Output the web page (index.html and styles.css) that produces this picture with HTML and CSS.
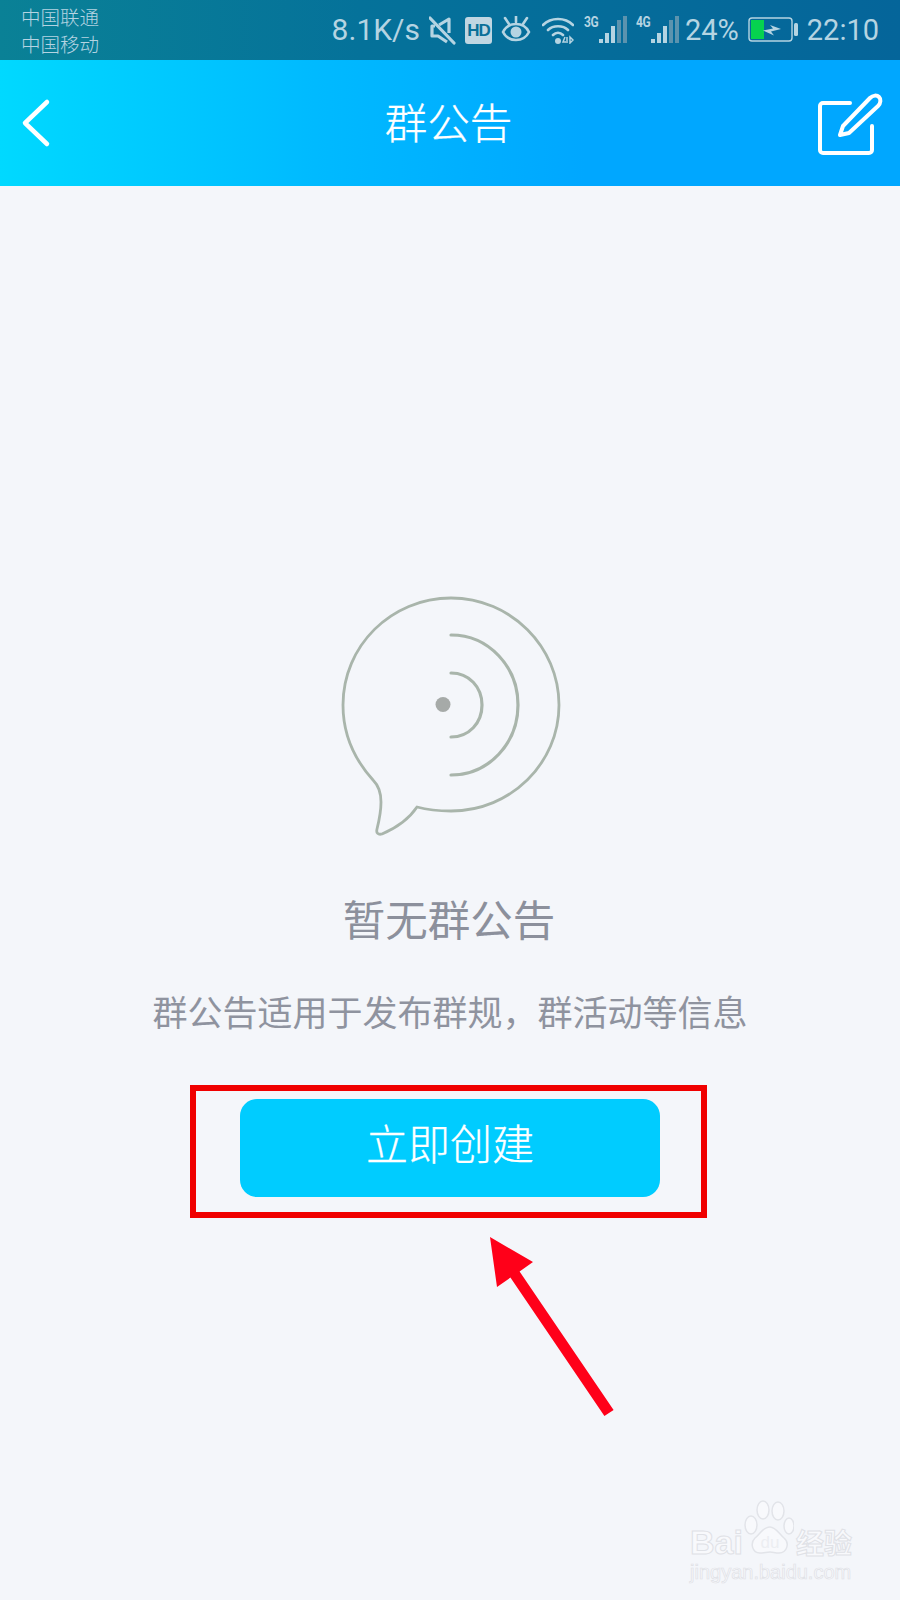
FILE: index.html
```html
<!DOCTYPE html>
<html>
  <head>
    <meta charset="utf-8">
    <title>群公告</title>
    <link rel="stylesheet" href="styles.css">
  </head>
  <body>
    <div class="status-bar">
      <div class="carriers">
        <div>中国联通</div>
        <div>中国移动</div>
      </div>
      <div class="status-right">
        <span class="speed">8.1K/s</span>
        <svg width="27" height="30" viewBox="0 0 27 30">
          <path d="M20 18V4l-10 6M6 11H3v10h6l9 6" fill="none" stroke="#b5d4e2" stroke-width="3.200" stroke-linejoin="round"/>
          <path d="M1 3l24 25" stroke="#b5d4e2" stroke-width="3.200" stroke-linecap="round"/>
        </svg>
        <span class="hd">HD</span>
        <svg class="ic-eye" width="30" height="28" viewBox="0 0 30 28">
          <path d="M2 16c3-6 8-8 13-8s10 2 13 8c-3 6-8 8-13 8s-10-2-13-8z" fill="none" stroke="#b5d4e2" stroke-width="2.600"/>
          <circle cx="15" cy="16" r="5.500" fill="#b5d4e2"/>
          <path d="M4 2l4 6M26 2l-4 6M15 0v6" stroke="#b5d4e2" stroke-width="2.600" stroke-linecap="round"/>
        </svg>
        <svg class="ic-wifi" width="32" height="28" viewBox="0 0 32 28">
          <path d="M1 9c8-8 22-8 30 0M6 14c5-5 15-5 20 0M11 19c3-3 7-3 10 0" fill="none" stroke="#b5d4e2" stroke-width="2.600" stroke-linecap="round"/>
          <circle cx="16" cy="25" r="3" fill="#b5d4e2"/>
          <path d="M23 21l-2 5h3M25 27v-6M28 21l3 3-3 3z" fill="none" stroke="#b5d4e2" stroke-width="1.500"/>
        </svg>
        <div class="net">
          <span class="net-label">3G</span>
          <svg width="30" height="28" viewBox="0 0 30 28">
            <rect x="0" y="23" width="4" height="4" fill="#b5d4e2"/>
            <rect x="6" y="17" width="4" height="10" fill="#b5d4e2"/>
            <rect x="12" y="10" width="4" height="17" fill="#b5d4e2"/>
            <rect x="18" y="4" width="4" height="23" fill="#5c93ae"/>
            <rect x="24" y="0" width="4" height="27" fill="#5c93ae"/>
          </svg>
        </div>
        <div class="net">
          <span class="net-label">4G</span>
          <svg width="30" height="28" viewBox="0 0 30 28">
            <rect x="0" y="23" width="4" height="4" fill="#b5d4e2"/>
            <rect x="6" y="17" width="4" height="10" fill="#b5d4e2"/>
            <rect x="12" y="10" width="4" height="17" fill="#b5d4e2"/>
            <rect x="18" y="4" width="4" height="23" fill="#5c93ae"/>
            <rect x="24" y="0" width="4" height="27" fill="#5c93ae"/>
          </svg>
        </div>
        <span class="pct">24%</span>
        <svg width="50" height="26" viewBox="0 0 50 26">
          <rect x="1" y="1" width="43" height="23" rx="3" fill="none" stroke="#b5d4e2" stroke-width="1.400"/>
          <rect x="3" y="3" width="13" height="19" fill="#06d24f"/>
          <path d="M15 13.500l10-2-3-3.500 11 4-10 2.500 3 4z" fill="#b5d4e2"/>
          <rect x="46" y="6" width="4" height="13" rx="1.500" fill="#b5d4e2"/>
        </svg>
        <span class="time">22:10</span>
      </div>
    </div>

    <div class="nav-bar">
      <svg width="70" height="70" viewBox="0 0 70 70">
        <path d="M47 14L25 35l22 21" fill="none" stroke="#fff" stroke-width="4.500" stroke-linecap="round" stroke-linejoin="round"/>
      </svg>
      <div class="nav-title">群公告</div>
      <svg width="70" height="70" viewBox="0 0 70 70">
        <path d="M35 15H8a3 3 0 0 0-3 3v44a3 3 0 0 0 3 3h46a3 3 0 0 0 3-3V38" fill="none" stroke="#fff" stroke-width="4" stroke-linecap="round"/>
        <path d="M25 47l3-9 27-28c3-3 7-3 9-1s2 6-1 9L34 45z" fill="none" stroke="#fff" stroke-width="4" stroke-linejoin="round"/>
      </svg>
    </div>

    <div class="main">
      <svg class="empty-icon" width="260" height="270" viewBox="0 0 260 270">
        <path d="M97 227c11 3 22 4 34 4 60 0 108-48 108-106S191 18 131 18 23 66 23 125c0 29 11 54 30 75 6 6 8 14 8 22 0 10-2 19-4 27-1 4 1 6 5 5 14-6 27-15 35-27z" fill="none" stroke="#a9b5ab" stroke-width="2.800" stroke-linejoin="round"/>
        <path d="M131 93c18 0 31 14 31 32s-13 32-31 32M131 55c38 0 67 32 67 70s-29 70-67 70" fill="none" stroke="#a9b5ab" stroke-width="3.200" stroke-linecap="round"/>
        <circle cx="123" cy="124.500" r="7.500" fill="#a6aaa8"/>
      </svg>
      <div class="empty-title">暂无群公告</div>
      <div class="empty-desc">群公告适用于发布群规，群活动等信息</div>
      <div class="highlight-box">
        <button type="button" class="create-btn">立即创建</button>
      </div>
    </div>

    <!-- 赤い矢印 -->
    <svg class="arrow" width="140" height="190" viewBox="0 0 140 190">
      <path d="M10 7L53 32 39.600 41.400 133.600 180 124.400 186.100 30.400 47.600 17 57z" fill="#ff0019"/>
    </svg>

    <div class="watermark">
      <div class="wm-top">
        <span class="wm-bai">Bai</span>
        <svg width="50" height="62" viewBox="0 0 50 62">
          <g fill="#f8f9fc" stroke="#e2e4e9" stroke-width="1.500">
            <ellipse cx="7" cy="25" rx="6" ry="9"/>
            <ellipse cx="19" cy="10" rx="6" ry="9"/>
            <ellipse cx="34" cy="11" rx="6" ry="9"/>
            <ellipse cx="45" cy="26" rx="5" ry="8"/>
            <path d="M26 27c6 0 9 7 14 11 6 5 3 15-5 15-4 0-6-1-9-1s-6 1-10 1c-8 0-10-10-5-15 5-4 8-11 15-11z"/>
          </g>
          <text x="26" y="48" class="wm-du">du</text>
        </svg>
        <span class="wm-cn">经验</span>
      </div>
      <div class="wm-url">jingyan.baidu.com</div>
    </div>
  </body>
</html>
```

FILE: styles.css
```css
* {
  box-sizing: border-box;
}

html, body {
  margin: 0;
  padding: 0;
}

body {
  position: relative;
  width: 900px;
  height: 1600px;
  overflow: hidden;
  background-color: #f4f6fa;
  font-family: "Noto Sans CJK SC", "Noto Sans", sans-serif;
}

/* ステータスバー */
.status-bar {
  display: flex;
  align-items: center;
  justify-content: space-between;
  height: 60px;
  padding: 0 21px;
  background: linear-gradient(90deg, #0a8196 0%, #05729a 40%, #05659a 100%);
  color: #b5d4e2;
}

.carriers {
  font-size: 19.500px;
  line-height: 27px;
  font-weight: 300;
}

.status-right {
  display: flex;
  align-items: center;
  gap: 9px;
}

.speed, .pct, .time {
  font-family: Roboto, "Liberation Sans", sans-serif;
  font-size: 29px;
  line-height: 60px;
}

.speed {
  font-size: 30px;
}

.pct {
  margin-left: -3px;
}

.hd {
  width: 27px;
  height: 27px;
  border-radius: 3px;
  background-color: #c0d6e2;
  color: #0a6f98;
  font-family: "Liberation Sans", sans-serif;
  font-size: 17px;
  font-weight: bold;
  line-height: 27px;
  text-align: center;
  letter-spacing: -1px;
}

.ic-eye {
  margin-right: 2px;
}

.ic-wifi {
  margin-right: 1px;
}

.net {
  display: flex;
  align-items: flex-end;
  width: 43px;
  height: 28px;
}

.net-label {
  align-self: flex-start;
  width: 14px;
  margin-right: 1px;
  font-family: Roboto, "Liberation Sans", sans-serif;
  font-size: 15px;
  font-weight: bold;
  line-height: 13px;
  letter-spacing: -0.500px;
  transform: scaleX(0.8);
  transform-origin: left top;
}

.net svg {
  flex: none;
  margin-right: -2px;
}

/* ナビゲーションバー */
.nav-bar {
  display: flex;
  align-items: center;
  justify-content: space-between;
  height: 126px;
  padding: 0 15px 0 0;
  background: linear-gradient(90deg, #00d9ff 0%, #00baff 35%, #00a7ff 65%, #00a7ff 100%);
}

.nav-title {
  margin-top: -5px;
  margin-left: 12px;
  color: #fff;
  font-size: 42.500px;
  font-weight: 300;
  -webkit-text-stroke: 0.300px #fff;
}

/* 空の状態 */
.main {
  display: flex;
  flex-direction: column;
  align-items: center;
  padding-top: 394px;
}

.empty-icon {
  display: block;
}

.empty-title {
  margin-top: 43px;
  margin-right: 2px;
  color: #8c909c;
  font-size: 42.500px;
  line-height: 50px;
}

.empty-desc {
  margin-top: 46px;
  color: #8f939f;
  font-size: 35px;
  line-height: 44px;
}

.highlight-box {
  margin-top: 52px;
  margin-right: 3px;
  width: 517px;
  height: 133px;
  padding: 8px 41px 0 44px;
  border: 6px solid #f00000;
}

.create-btn {
  display: block;
  width: 420px;
  height: 98px;
  padding: 0 0 14px;
  border: none;
  border-radius: 17px;
  background-color: #00ccff;
  color: #fff;
  font-family: inherit;
  font-size: 42px;
  font-weight: 300;
  -webkit-text-stroke: 0.300px #fff;
}

/* 矢印 */
.arrow {
  position: absolute;
  left: 480px;
  top: 1230px;
}

/* 透かし */
.watermark {
  position: absolute;
  left: 690px;
  top: 1500px;
  width: 165px;
}

.wm-top {
  display: flex;
  align-items: flex-end;
  height: 62px;
}

.wm-bai {
  width: 54px;
  color: #f8f9fc;
  -webkit-text-stroke: 1px #dfe1e6;
  font-family: "Liberation Sans", sans-serif;
  font-size: 34px;
  font-weight: bold;
  line-height: 40px;
}

.wm-du {
  fill: #eceef2;
  font-family: "Liberation Sans", sans-serif;
  font-size: 17px;
  text-anchor: middle;
}

.wm-cn {
  margin-left: 2px;
  color: #f8f9fc;
  -webkit-text-stroke: 1px #dfe1e6;
  font-size: 28px;
  font-weight: bold;
  line-height: 40px;
}

.wm-url {
  margin-top: -2px;
  color: #f8f9fc;
  -webkit-text-stroke: 0.700px #dfe1e6;
  font-family: "Liberation Sans", sans-serif;
  font-size: 20px;
  line-height: 24px;
  white-space: nowrap;
}
```
